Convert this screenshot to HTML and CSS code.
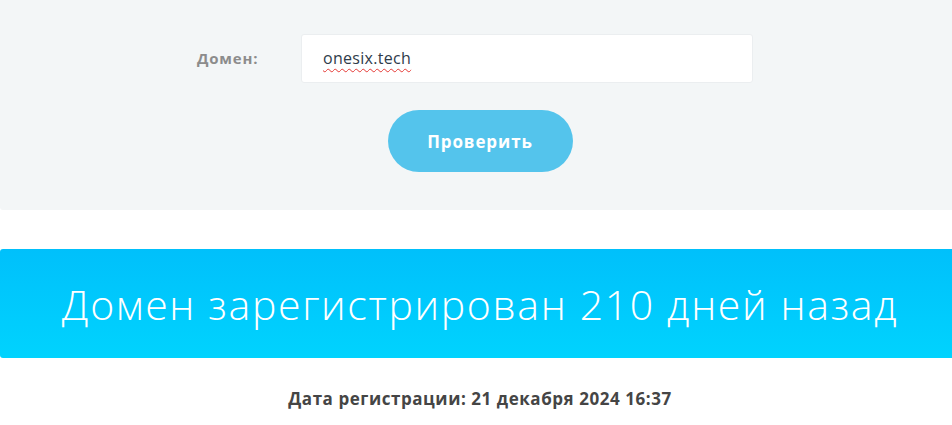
FILE: index.html
```html
<!DOCTYPE html>
<html lang="ru">
<head>
<meta charset="utf-8">
<link rel="stylesheet" href="styles.css">
</head>
<body>
<div class="page">
  <section class="check">
    <form class="form">
      <div class="row">
        <label class="label">Домен:</label>
        <div class="input">onesix.tech</div>
      </div>
      <button class="btn" type="button">Проверить</button>
    </form>
  </section>
  <section class="banner">Домен зарегистрирован 210 дней назад</section>
  <p class="date">Дата регистрации: 21 декабря 2024 16:37</p>
</div>
</body>
</html>
```
FILE: styles.css
```css
html, body { margin: 0; padding: 0; overflow: hidden; background: #fff; }
body { font-family: "Open Sans", "DejaVu Sans", sans-serif; }
.page { width: 960px; }
.check {
  background: #f3f6f7;
  height: 210px;
  border-radius: 0 0 3px 3px;
  display: flex;
  flex-direction: column;
  align-items: center;
  box-sizing: border-box;
  padding-top: 34px;
}
.form { display: flex; flex-direction: column; align-items: center; }
.row { display: flex; align-items: center; width: 960px; }
.label {
  width: 301px;
  box-sizing: border-box;
  padding-left: 197px;
  font-weight: 700;
  font-size: 15px;
  letter-spacing: 0.8px;
  color: #8c8c8c;
  margin-top: -2px;
}
.input {
  width: 452px;
  height: 49px;
  box-sizing: border-box;
  background: #fff;
  border: 1px solid #ebeef0;
  border-radius: 3px;
  padding-left: 21px;
  font-size: 16px;
  letter-spacing: 0.3px;
  line-height: 47px;
  color: #2f3b4a;
  text-decoration: underline wavy #e53935 1px;
  text-underline-offset: 4px;
  text-decoration-skip-ink: none;
}
.btn {
  margin-top: 27px;
  width: 185px;
  height: 62px;
  border: 0;
  border-radius: 31px;
  background: #54c4ec;
  color: #fff;
  font-family: inherit;
  font-weight: 700;
  font-size: 17px;
  letter-spacing: 0.9px;
}
.banner {
  margin-top: 39px;
  height: 109px;
  border-radius: 3px;
  background: linear-gradient(180deg, #00c0fb 0%, #00d3fe 100%);
  color: #fff;
  font-weight: 300;
  font-size: 41px;
  letter-spacing: 1.65px;
  display: flex;
  align-items: center;
  justify-content: center;
}
.date {
  margin: 29px 0 0;
  text-align: center;
  font-weight: 700;
  font-size: 17px;
  letter-spacing: 0.55px;
  color: #454545;
}
```
